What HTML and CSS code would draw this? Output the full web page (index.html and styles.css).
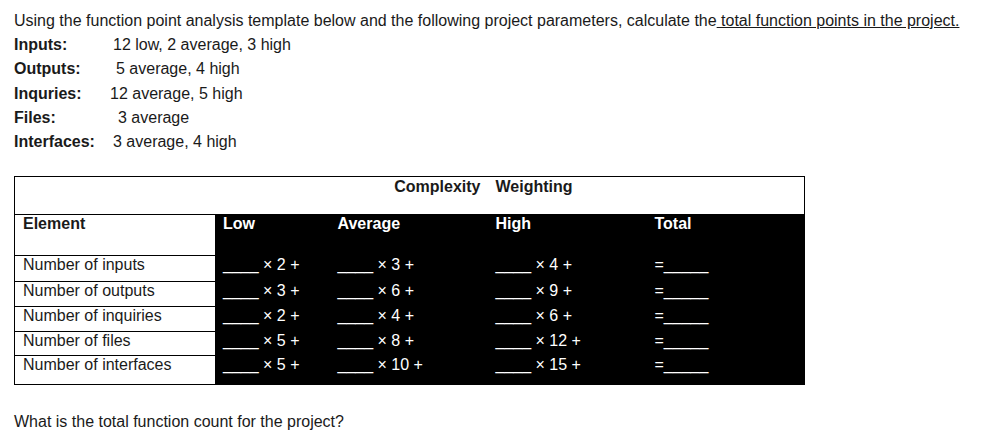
FILE: index.html
```html
<!DOCTYPE html>
<html>
<head>
<meta charset="utf-8">
<link rel="stylesheet" href="styles.css">
</head>
<body>
<div class="page">
  <p class="intro">Using the function point analysis template below and the following project parameters, calculate the<span class="ul"> total function points in the project.</span></p>
  <div class="params">
    <div class="prow"><b class="lbl">Inputs:</b><span class="val v-in">12 low, 2 average, 3 high</span></div>
    <div class="prow"><b class="lbl">Outputs:</b><span class="val v-out">5 average, 4 high</span></div>
    <div class="prow"><b class="lbl">Inquries:</b><span class="val v-inq">12 average, 5 high</span></div>
    <div class="prow"><b class="lbl">Files:</b><span class="val v-file">3 average</span></div>
    <div class="prow"><b class="lbl">Interfaces:</b><span class="val v-int">3 average, 4 high</span></div>
  </div>

  <table class="fp">
    <colgroup>
      <col class="c-el"><col class="c-low"><col class="c-avg"><col class="c-high"><col class="c-tot">
    </colgroup>
    <tr class="r-top">
      <th colspan="2"></th>
      <th class="cw-a">Complexity</th>
      <th class="cw-b">Weighting</th>
      <th></th>
    </tr>
    <tr class="r-head">
      <th class="el">Element</th>
      <th class="blk">Low</th>
      <th class="blk">Average</th>
      <th class="blk">High</th>
      <th class="blk">Total</th>
    </tr>
    <tr class="r1">
      <td class="el">Number of inputs</td>
      <td class="blk">____ × 2 +</td>
      <td class="blk">____ × 3 +</td>
      <td class="blk">____ × 4 +</td>
      <td class="blk">=_____</td>
    </tr>
    <tr class="r2">
      <td class="el">Number of outputs</td>
      <td class="blk">____ × 3 +</td>
      <td class="blk">____ × 6 +</td>
      <td class="blk">____ × 9 +</td>
      <td class="blk">=_____</td>
    </tr>
    <tr class="r3">
      <td class="el">Number of inquiries</td>
      <td class="blk">____ × 2 +</td>
      <td class="blk">____ × 4 +</td>
      <td class="blk">____ × 6 +</td>
      <td class="blk">=_____</td>
    </tr>
    <tr class="r4">
      <td class="el">Number of files</td>
      <td class="blk">____ × 5 +</td>
      <td class="blk">____ × 8 +</td>
      <td class="blk">____ × 12 +</td>
      <td class="blk">=_____</td>
    </tr>
    <tr class="r5">
      <td class="el">Number of interfaces</td>
      <td class="blk">____ × 5 +</td>
      <td class="blk">____ × 10 +</td>
      <td class="blk">____ × 15 +</td>
      <td class="blk">=_____</td>
    </tr>
  </table>

  <p class="question">What is the total function count for the project?</p>
</div>
</body>
</html>
```

FILE: styles.css
```css
html, body {
  margin: 0;
  padding: 0;
  background: #fff;
}
body {
  font-family: "Liberation Sans", Arial, sans-serif;
  font-size: 16px;
  color: #1a1a1a;
}
.page {
  padding: 9px 14px 0 14px;
}
.intro {
  margin: 0;
  line-height: 24px;
}
.ul {
  text-decoration: underline;
}
.params {
  display: flex;
  flex-direction: column;
}
.prow {
  display: flex;
  line-height: 24.25px;
}
.lbl {
  font-weight: bold;
  width: 96px;
  flex: none;
}
.v-in { margin-left: 3px; }
.v-out { margin-left: 6px; }
.v-inq { margin-left: 0; }
.v-file { margin-left: 8px; }
.v-int { margin-left: 3px; }

.fp {
  margin-top: 22px;
  border-collapse: collapse;
  table-layout: fixed;
  width: 790px;
  border: 1px solid #000;
  line-height: 18px;
}
.c-el { width: 201px; }
.c-low { width: 115px; }
.c-avg { width: 158px; }
.c-high { width: 159px; }
.c-tot { width: 157px; }

.fp th, .fp td {
  padding: 0 7px;
  vertical-align: top;
  text-align: left;
  white-space: nowrap;
}
.fp th {
  font-weight: bold;
}
.r-top th {
  height: 36px;
  padding-top: 1px;
  border-bottom: 1px solid #000;
}
.fp .cw-a {
  text-align: right;
  padding-right: 8px;
}
.r-head th {
  height: 40px;
}
.fp .el {
  padding-left: 8px;
  border-right: 1px solid #000;
  border-bottom: 1px solid #000;
  background: #fff;
  color: #1a1a1a;
}
.fp .blk {
  background: #000;
  color: #fff;
}
.r-head th.blk { color: #fff; }
.r1 td { height: 25px; }
.r2 td { height: 24px; }
.r3 td { height: 24px; }
.r4 td { height: 23px; }
.r5 td { height: 28px; }

.question {
  margin: 25px 0 0 0;
  line-height: 24px;
}
```
